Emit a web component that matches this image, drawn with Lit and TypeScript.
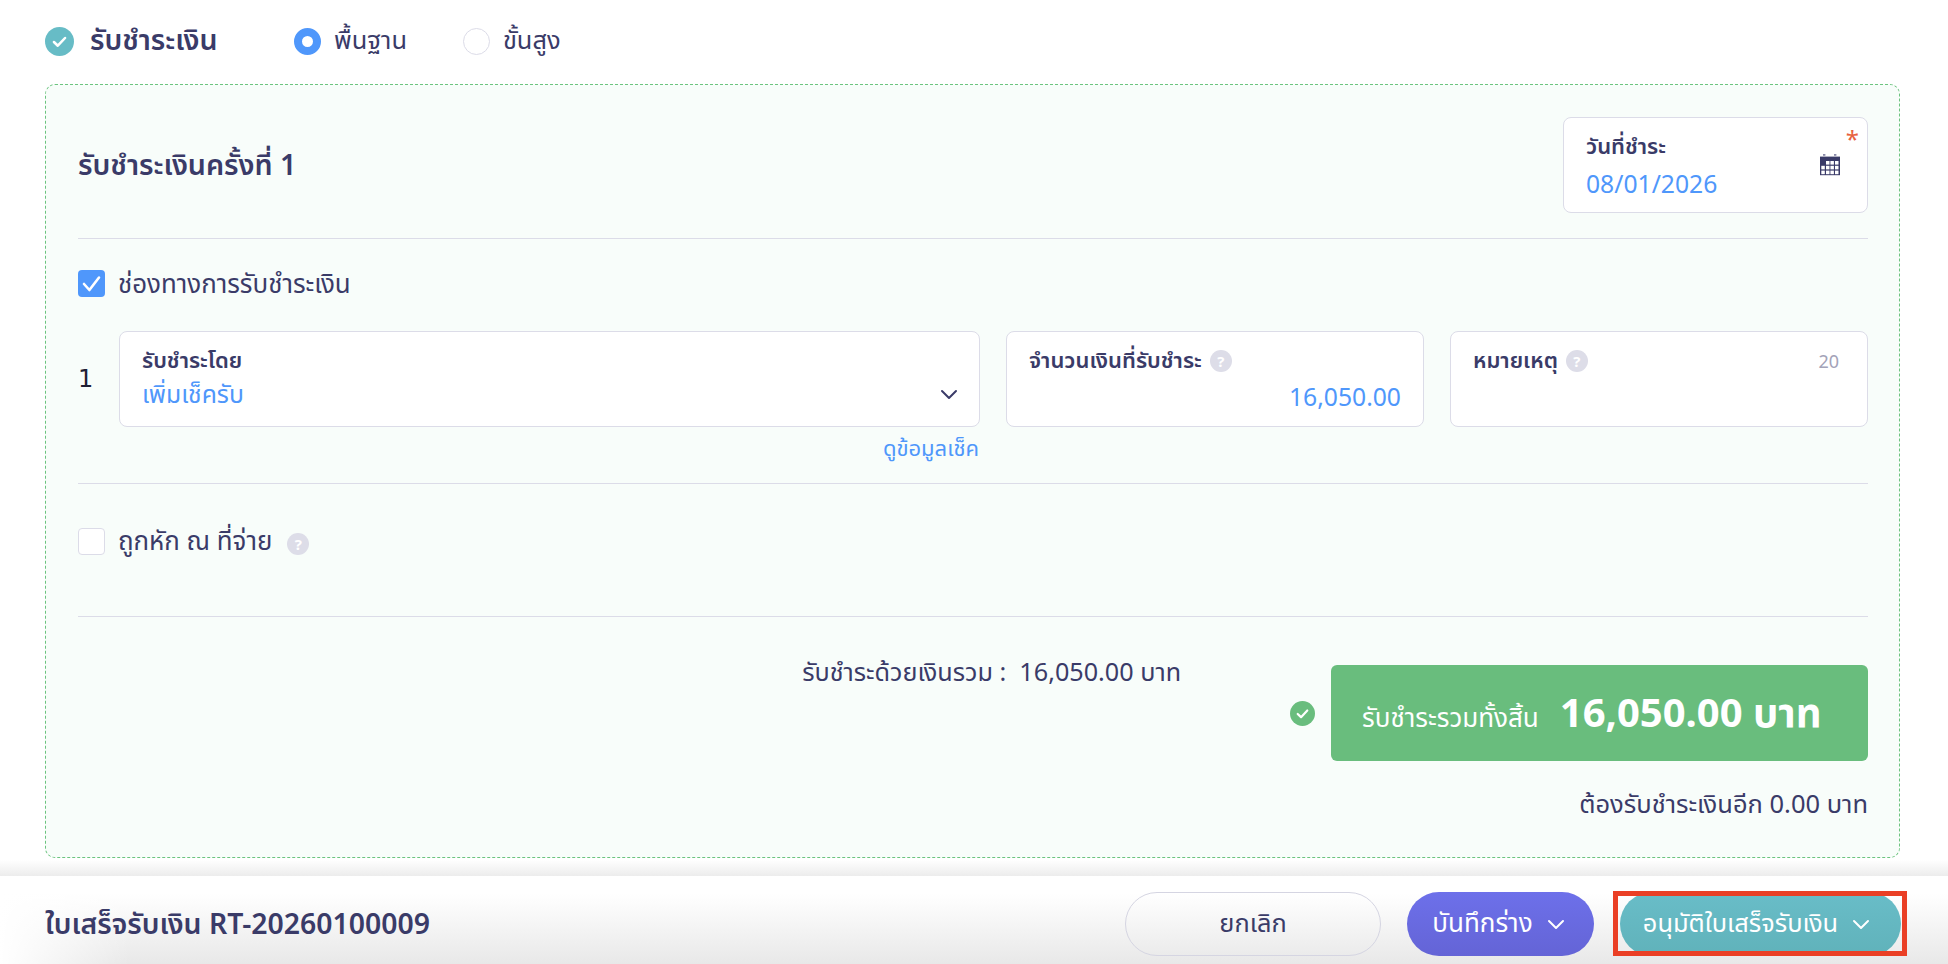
import { LitElement, html, css, svg } from 'lit';
import { customElement } from 'lit/decorators.js';

const check = (size: number, fill: string) => html`
  <svg class="tick" width=${size} height=${size} viewBox="0 0 24 24">
    <circle cx="12" cy="12" r="12" fill=${fill}></circle>
    <path d="M7.4 12.4l3.2 3.1 6-6.4" fill="none" stroke="#fff" stroke-width="2.1" stroke-linecap="round" stroke-linejoin="round"></path>
  </svg>
`;

const chevron = (color: string) => html`
  <svg class="chev" width="18" height="11" viewBox="0 0 18 11">
    <path d="M2 2l7 7 7-7" fill="none" stroke=${color} stroke-width="2" stroke-linecap="round" stroke-linejoin="round"></path>
  </svg>
`;

// first row has no cell in the left column
const calCells = [1.3, 6, 10.4, 15].flatMap((x, c) =>
  [7, 11.8, 16.6]
    .filter((_, r) => !(r === 0 && c === 0))
    .map((y) => svg`<rect x=${x} y=${y} width="3.5" height="3.6" fill="#fff"></rect>`)
);

const calendar = html`
  <svg width="20" height="22" viewBox="0 0 20 22" style="display:block">
    <rect x="3" y="0" width="2.4" height="1.8" fill="#8a8aa8"></rect>
    <rect x="14" y="0" width="2.4" height="1.8" fill="#8a8aa8"></rect>
    <rect x="0" y="2.6" width="20" height="18.6" fill="#3a3b68"></rect>
    ${calCells}
  </svg>
`;

const help = html`<span class="help">?</span>`;

@customElement('app-root')
export class AppRoot extends LitElement {
  static styles = css`
    :host {
      display: block;
      font-family: 'Noto Sans', 'Noto Sans Thai', sans-serif;
      color: #3a3b68;
    }

    .page {
      height: 964px;
      display: flex;
      flex-direction: column;
      overflow: hidden;
      background: #fff;
    }

    .main {
      flex: 1;
      padding: 0 48px 0 45px;
      background: linear-gradient(#fff 860px, #ececec 876px);
    }

    .head {
      height: 84px;
      box-sizing: border-box;
      padding-bottom: 2px;
      display: flex;
      align-items: center;
    }

    .head-title {
      margin-left: 16px;
      width: 204px;
      font-size: 28.5px;
      font-weight: 600;
    }

    .radio {
      width: 27px;
      height: 27px;
      box-sizing: border-box;
      border-radius: 50%;
      border: 1px solid #dcdce8;
      background: #fff;
    }

    .radio.on {
      border: 8px solid #4f97fb;
    }

    .radio-text {
      margin: 0 56px 0 13px;
      font-size: 25.4px;
    }

    .panel {
      height: 774px;
      box-sizing: border-box;
      padding: 32px 31px 0 32px;
      background: #f8fdfa;
      border: 1px dashed #6cc47f;
      border-radius: 10px;
    }

    .top {
      display: flex;
      justify-content: space-between;
      align-items: center;
    }

    .title {
      font-size: 28.6px;
      font-weight: 600;
      position: relative;
      top: 1px;
    }

    .box {
      position: relative;
      height: 96px;
      box-sizing: border-box;
      background: #fff;
      border: 1px solid #dcdce8;
      border-radius: 8px;
      padding: 14px 22px;
    }

    .date {
      width: 305px;
    }

    .date .value {
      margin-top: 4px;
    }

    .star {
      position: absolute;
      top: 6px;
      right: 8px;
      font-size: 24px;
      line-height: 30px;
      color: #e8623f;
    }

    .cal {
      position: absolute;
      top: 36px;
      right: 27px;
    }

    .label {
      display: flex;
      align-items: center;
      gap: 8px;
      height: 30px;
      font-size: 22px;
      font-weight: 600;
    }

    .value {
      font-size: 24.7px;
      line-height: 36px;
      color: #4f97fb;
    }

    .right {
      text-align: right;
      margin-top: 3px;
    }

    .help {
      width: 22px;
      height: 22px;
      border-radius: 50%;
      background: #dddde8;
      color: #fff;
      font-size: 15px;
      font-weight: 700;
      line-height: 22px;
      text-align: center;
      flex: none;
    }

    .line {
      height: 1px;
      background: #dcdce8;
    }

    .check-row {
      display: flex;
      align-items: center;
      gap: 13px;
      height: 27px;
      font-size: 25.9px;
    }

    .txt {
      padding-top: 2px;
    }

    .cb {
      width: 27px;
      height: 27px;
      box-sizing: border-box;
      border: 1px solid #dcdce8;
      border-radius: 4px;
      background: #fff;
      flex: none;
    }

    .cb.on {
      border: 0;
      background: #4f97fb;
    }

    .cb svg {
      display: block;
    }

    .pay-grid {
      display: grid;
      grid-template-columns: 15px 861px 418px 418px;
      column-gap: 26px;
      align-items: center;
      margin-top: 34px;
    }

    .num {
      font-family: 'DejaVu Sans', sans-serif;
      font-size: 24px;
      color: #1f1f33;
    }

    .pick .chev {
      position: absolute;
      top: 57px;
      right: 21px;
    }

    .count {
      margin-left: auto;
      margin-right: 6px;
      font-size: 18px;
      font-weight: 400;
      color: #a3a3b8;
    }

    .link {
      height: 38px;
      width: 901px;
      text-align: right;
      font-size: 22px;
      line-height: 40px;
      color: #4f97fb;
    }

    .wht .help {
      margin-left: 2px;
      position: relative;
      top: 2px;
    }

    .summary {
      display: flex;
      justify-content: flex-end;
      gap: 109px;
      margin-top: 48px;
    }

    .sum-text {
      font-size: 25.2px;
      line-height: 13px;
    }

    .sum-col {
      width: 578px;
    }

    .total-row {
      display: flex;
      align-items: center;
      gap: 16px;
    }

    .total {
      flex: 1;
      height: 96px;
      box-sizing: border-box;
      padding: 2px 31px 0;
      display: flex;
      align-items: center;
      gap: 21px;
      background: #69bd7d;
      border-radius: 6px;
      color: #fff;
    }

    .total-label {
      font-size: 26px;
      position: relative;
      top: 5px;
    }

    .total-amount {
      font-size: 40px;
      font-weight: 700;
      white-space: nowrap;
    }

    .remain {
      margin-top: 24px;
      text-align: right;
      font-size: 25.5px;
      line-height: 36px;
    }

    .bar {
      height: 88px;
      flex: none;
      box-sizing: border-box;
      padding: 16px 47px 8px 45px;
      display: flex;
      align-items: center;
      background: linear-gradient(to right, #fff, rgba(255, 255, 255, 0) 130px),
        linear-gradient(#fff 20%, #e8e8e8);
    }

    .doc {
      flex: 1;
      padding-top: 2px;
      font-size: 28.4px;
      font-weight: 600;
    }

    .actions {
      display: flex;
      gap: 26px;
    }

    .btn {
      height: 64px;
      box-sizing: border-box;
      border-radius: 32px;
      display: flex;
      align-items: center;
      justify-content: center;
      gap: 14px;
      font-size: 25.4px;
      color: #fff;
    }

    .cancel {
      width: 256px;
      color: #3a3b68;
      border: 1px solid #d5d5e2;
    }

    .save {
      width: 187px;
      padding-right: 4px;
      font-size: 26px;
      background: linear-gradient(#6d70ea, #6464d6);
    }

    .approve {
      position: relative;
      width: 281px;
      padding-right: 8px;
      background: linear-gradient(#69bdc8, #60b2ba);
    }

    .mark {
      position: absolute;
      top: -1px;
      left: -7px;
      right: -6px;
      bottom: 0;
      border: 5px solid #ea3f25;
    }
  `;

  render() {
    return html`
      <div class="page">
        <div class="main">
          <div class="head">
            ${check(29, '#67bcc6')}
            <span class="head-title">รับชำระเงิน</span>
            <span class="radio on"></span>
            <span class="radio-text">พื้นฐาน</span>
            <span class="radio"></span>
            <span class="radio-text">ขั้นสูง</span>
          </div>
          <section class="panel">
            <div class="top">
              <span class="title">รับชำระเงินครั้งที่ 1</span>
              <div class="box date">
                <span class="star">*</span>
                <div class="label">วันที่ชำระ</div>
                <div class="value">08/01/2026</div>
                <span class="cal">${calendar}</span>
              </div>
            </div>
            <div class="line" style="margin-top:25px"></div>
            <div class="check-row" style="margin-top:31px">
              <span class="cb on">
                <svg width="27" height="27" viewBox="0 0 27 27">
                  <path d="M6 14l5.4 6L21 7.5" fill="none" stroke="#fff" stroke-width="2.6" stroke-linecap="round" stroke-linejoin="round"></path>
                </svg>
              </span>
              <span class="txt">ช่องทางการรับชำระเงิน</span>
            </div>
            <div class="pay-grid">
              <span class="num">1</span>
              <div class="box pick">
                <div class="label">รับชำระโดย</div>
                <div class="value">เพิ่มเช็ครับ</div>
                ${chevron('#3a3b68')}
              </div>
              <div class="box">
                <div class="label">จำนวนเงินที่รับชำระ ${help}</div>
                <div class="value right">16,050.00</div>
              </div>
              <div class="box">
                <div class="label">หมายเหตุ ${help}<span class="count">20</span></div>
              </div>
            </div>
            <div class="link">ดูข้อมูลเช็ค</div>
            <div class="line" style="margin-top:18px"></div>
            <div class="check-row wht" style="margin-top:44px">
              <span class="cb"></span>
              ถูกหัก ณ ที่จ่าย ${help}
            </div>
            <div class="line" style="margin-top:61px"></div>
            <div class="summary">
              <div class="sum-text">รับชำระด้วยเงินรวม :&nbsp; 16,050.00 บาท</div>
              <div class="sum-col">
                <div class="total-row">
                  ${check(25, '#69bd7d')}
                  <div class="total">
                    <span class="total-label">รับชำระรวมทั้งสิ้น</span>
                    <span class="total-amount">16,050.00 บาท</span>
                  </div>
                </div>
                <div class="remain">ต้องรับชำระเงินอีก 0.00 บาท</div>
              </div>
            </div>
          </section>
        </div>
        <footer class="bar">
          <div class="doc">ใบเสร็จรับเงิน RT-20260100009</div>
          <div class="actions">
            <div class="btn cancel">ยกเลิก</div>
            <div class="btn save">บันทึกร่าง ${chevron('#fff')}</div>
            <div class="btn approve">อนุมัติใบเสร็จรับเงิน ${chevron('#fff')}<span class="mark"></span></div>
          </div>
        </footer>
      </div>
    `;
  }
}
